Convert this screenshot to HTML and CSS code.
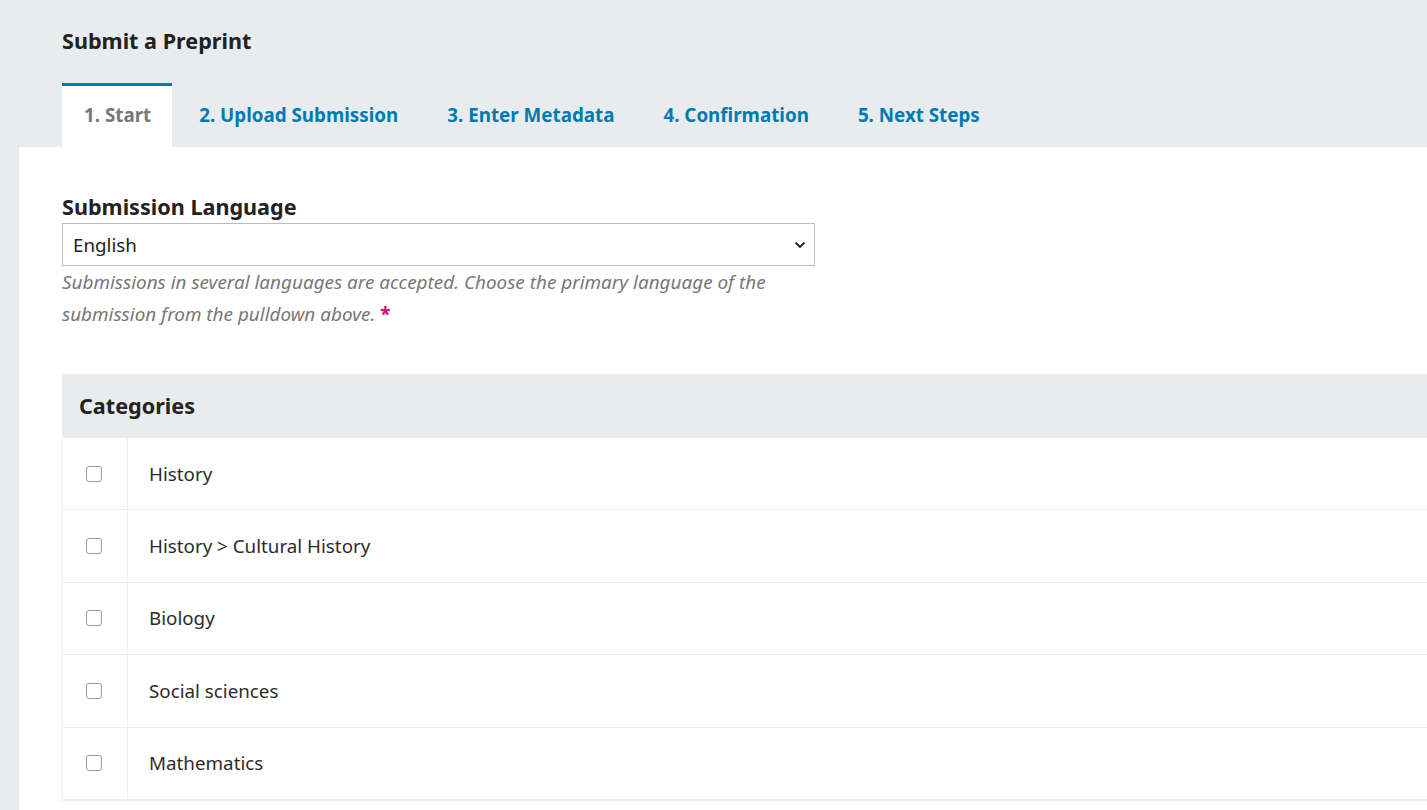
FILE: index.html
```html
<!DOCTYPE html>
<html lang="en">
<head>
<meta charset="utf-8">
<title>Submit a Preprint</title>
<link rel="stylesheet" href="styles.css">
</head>
<body>
<div class="page">
  <header class="head">
    <h1 class="title">Submit a Preprint</h1>
    <nav class="tabs">
      <a class="tab active">1. Start</a>
      <a class="tab">2. Upload Submission</a>
      <a class="tab">3. Enter Metadata</a>
      <a class="tab">4. Confirmation</a>
      <a class="tab">5. Next Steps</a>
    </nav>
  </header>
  <main class="panel">
    <div class="field">
      <label class="label" for="lang">Submission Language</label>
      <div class="select-wrap">
        <select id="lang" class="select"><option>English</option></select>
        <svg class="chev" width="12" height="8" viewBox="0 0 12 8"><path d="M1.5 1.5 L6 6 L10.5 1.5" fill="none" stroke="#222" stroke-width="1.8"/></svg>
      </div>
      <p class="help">Submissions in several languages are accepted. Choose the primary language of the submission from the pulldown above. <span class="req">*</span></p>
    </div>
    <section class="cats">
      <div class="cats-head">Categories</div>
      <div class="row"><div class="cell-check"><span class="box"></span></div><div class="cell-label">History</div></div>
      <div class="row"><div class="cell-check"><span class="box"></span></div><div class="cell-label">History &gt; Cultural History</div></div>
      <div class="row"><div class="cell-check"><span class="box"></span></div><div class="cell-label">Biology</div></div>
      <div class="row"><div class="cell-check"><span class="box"></span></div><div class="cell-label">Social sciences</div></div>
      <div class="row"><div class="cell-check"><span class="box"></span></div><div class="cell-label">Mathematics</div></div>
    </section>
  </main>
</div>
</body>
</html>
```
FILE: styles.css
```css
html, body {
  margin: 0;
  padding: 0;
  overflow: hidden;
}
body {
  background: #e9ecee;
  font-family: "Noto Sans", "Open Sans", sans-serif;
  color: #222;
}
.page {
  width: 1500px;
}
.head {
  padding-left: 62px;
}
.title {
  margin: 0;
  padding-top: 26px;
  font-size: 21.6px;
  line-height: 30px;
  font-weight: 700;
  color: #222;
  height: 57px;
}
.tabs {
  display: flex;
  height: 64px;
}
.tab {
  display: flex;
  align-items: center;
  padding: 0 24px 4px 25px;
  font-size: 18.8px;
  font-weight: 700;
  color: #007ab2;
  border-top: 3px solid transparent;
  box-sizing: border-box;
}
.tab.active {
  background: #fff;
  color: #777;
  border-top-color: #007ab2;
  padding: 0 21px 4px 22px;
  margin-right: 2px;
}
.panel {
  margin-left: 19px;
  background: #fff;
  padding: 45px 0 40px 43px;
  min-height: 700px;
}
.field {
  width: 760px;
}
.label {
  display: block;
  font-size: 21.6px;
  line-height: 30px;
  font-weight: 700;
  color: #222;
  margin-bottom: 1px;
}
.select-wrap {
  position: relative;
  width: 753px;
}
.select {
  appearance: none;
  -webkit-appearance: none;
  display: block;
  width: 753px;
  height: 43px;
  box-sizing: border-box;
  border: 1px solid #bbb;
  border-radius: 0;
  background: #fff;
  padding: 0 10px;
  font-family: "Noto Sans", sans-serif;
  font-size: 18.8px;
  color: #222;
}
.chev {
  position: absolute;
  right: 9px;
  top: 18px;
  pointer-events: none;
}
.help {
  margin: 0;
  font-size: 18.9px;
  line-height: 32px;
  font-style: italic;
  color: #777;
}
.req {
  color: #d00a6c;
  font-style: normal;
  font-weight: 700;
}
.cats {
  margin-top: 44px;
  border: 1px solid #eee;
  border-top: 0;
  box-shadow: 0 1px 1px rgba(0,0,0,0.06);
}
.cats-head {
  background: #e9ecee;
  height: 63px;
  display: flex;
  align-items: center;
  padding-left: 16px;
  font-size: 21.6px;
  font-weight: 700;
  color: #222;
}
.row {
  display: flex;
  height: 72.4px;
  box-sizing: border-box;
  border-top: 1px solid #eee;
}
.row:first-of-type {
  border-top: 0;
  height: 71.4px;
}
.cell-check {
  width: 64px;
  flex: none;
  display: flex;
  align-items: center;
  justify-content: center;
  border-right: 1px solid #eee;
}
.box {
  width: 14px;
  height: 14px;
  border: 1.5px solid #9a9a9a;
  border-radius: 3px;
  margin-right: 2px;
}
.cell-label {
  display: flex;
  align-items: center;
  padding-left: 21px;
  font-size: 18.8px;
  color: #2b2b2b;
}
```
